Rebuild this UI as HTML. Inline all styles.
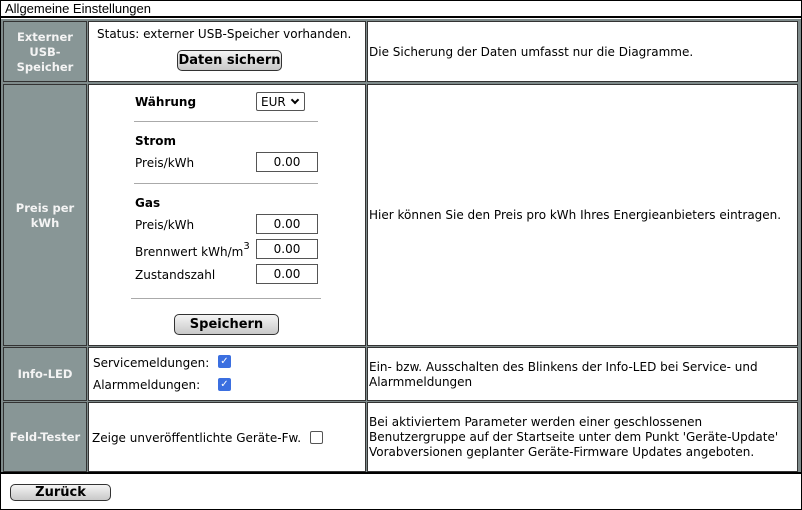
<!DOCTYPE html>
<html><head><meta charset="utf-8"><style>
*{margin:0;padding:0;box-sizing:border-box}
body{width:802px;height:510px;background:#fff;font-family:"DejaVu Sans","Liberation Sans",sans-serif;font-size:12px;color:#000;position:relative;overflow:hidden}
.a{position:absolute;white-space:nowrap}
.t{margin-top:1px}
.frame{position:absolute;left:0;top:0;width:802px;height:510px;border:1px solid #000}
.hdr{left:1px;top:1px;width:800px;height:17px;border-bottom:2px solid #000;font-family:"Liberation Sans",sans-serif;font-size:13px;padding-left:4px;line-height:16px}
.grid{left:1px;top:19px;width:800px;height:455px;background:#7f8b8b;border-bottom:2px solid #000}
.c{position:absolute;background:#fff;border:1px solid #333}
.l{background:#889696;color:#f4f4f4;font-weight:bold;text-align:center;display:flex;align-items:center;justify-content:center;line-height:15px;font-size:11.5px;padding-top:1px}
.btn{position:absolute;border:1px solid #333;border-radius:5px;background:linear-gradient(#f4f4f4,#c8c8c8);font-weight:bold;font-size:13px;text-align:center}
.in{position:absolute;border:1px solid #555;width:62px;height:20px;text-align:center;line-height:19px;font-size:12px}
.hr{position:absolute;height:1px;background:#aaa}
.cb{position:absolute;width:13px;height:13px;border-radius:2px;background:#3b6fe0;color:#fff;font-size:10px;line-height:13px;text-align:center;font-weight:bold}
.cbe{position:absolute;width:13px;height:13px;border-radius:2px;border:1px solid #555;background:#fff}
</style></head><body>
<div class="frame"></div>
<div class="a hdr">Allgemeine Einstellungen</div>
<div class="a grid"></div>
<div class="c l" style="left:3px;top:21px;width:84px;height:61px">Externer<br>USB-<br>Speicher</div>
<div class="c" style="left:88px;top:21px;width:278px;height:61px"></div>
<div class="c" style="left:367px;top:21px;width:431px;height:61px"></div>
<div class="c l" style="left:3px;top:84px;width:84px;height:262px">Preis per<br>kWh</div>
<div class="c" style="left:88px;top:84px;width:278px;height:262px"></div>
<div class="c" style="left:367px;top:84px;width:431px;height:262px"></div>
<div class="c l" style="left:3px;top:347px;width:84px;height:54px">Info-LED</div>
<div class="c" style="left:88px;top:347px;width:278px;height:54px"></div>
<div class="c" style="left:367px;top:347px;width:431px;height:54px"></div>
<div class="c l" style="left:3px;top:402px;width:84px;height:70px">Feld-Tester</div>
<div class="c" style="left:88px;top:402px;width:278px;height:70px"></div>
<div class="c" style="left:367px;top:402px;width:431px;height:70px"></div>

<div class="a" style="left:97px;top:27px">Status: externer USB-Speicher vorhanden.</div>
<div class="btn" style="left:177px;top:50px;width:105px;height:21px;line-height:20px">Daten sichern</div>
<div class="a" style="left:369px;top:45px">Die Sicherung der Daten umfasst nur die Diagramme.</div>

<div class="a" style="left:135px;top:95px;font-weight:bold">Währung</div>
<div class="a" style="left:256px;top:92px;width:49px;height:19px;border:1px solid #555;border-radius:2px;line-height:18px;padding-left:4px;font-size:12px">EUR <span style="display:inline-block;width:6px;height:6px;border-right:2px solid #000;border-bottom:2px solid #000;transform:rotate(45deg);position:relative;top:-3px;left:2px"></span></div>
<div class="hr" style="left:134px;top:121px;width:184px"></div>
<div class="a" style="left:135px;top:134px;font-weight:bold">Strom</div>
<div class="a" style="left:135px;top:156px">Preis/kWh</div>
<div class="in" style="left:256px;top:152px">0.00</div>
<div class="hr" style="left:134px;top:183px;width:184px"></div>
<div class="a" style="left:135px;top:196px;font-weight:bold">Gas</div>
<div class="a" style="left:135px;top:218px">Preis/kWh</div>
<div class="in" style="left:256px;top:214px">0.00</div>
<div class="a" style="left:135px;top:243px">Brennwert kWh/m<sup style="font-size:10px;position:relative;top:-2px">3</sup></div>
<div class="in" style="left:256px;top:239px">0.00</div>
<div class="a" style="left:135px;top:268px">Zustandszahl</div>
<div class="in" style="left:256px;top:264px">0.00</div>
<div class="hr" style="left:131px;top:298px;width:190px"></div>
<div class="btn" style="left:174px;top:314px;width:105px;height:21px;line-height:20px">Speichern</div>
<div class="a" style="left:369px;top:208px">Hier können Sie den Preis pro kWh Ihres Energieanbieters eintragen.</div>

<div class="a" style="left:93px;top:356px">Servicemeldungen:</div>
<div class="cb" style="left:218px;top:355px">&#10003;</div>
<div class="a" style="left:93px;top:378px">Alarmmeldungen:</div>
<div class="cb" style="left:218px;top:378px">&#10003;</div>
<div class="a" style="left:369px;top:360px;line-height:15px">Ein- bzw. Ausschalten des Blinkens der Info-LED bei Service- und<br>Alarmmeldungen</div>

<div class="a" style="left:92px;top:431px">Zeige unveröffentlichte Geräte-Fw.</div>
<div class="cbe" style="left:310px;top:431px"></div>
<div class="a" style="left:369px;top:415px;line-height:15px">Bei aktiviertem Parameter werden einer geschlossenen<br>Benutzergruppe auf der Startseite unter dem Punkt 'Geräte-Update'<br>Vorabversionen geplanter Geräte-Firmware Updates angeboten.</div>

<div class="btn" style="left:10px;top:484px;width:101px;height:17px;line-height:16px">Zurück</div>
</body></html>
